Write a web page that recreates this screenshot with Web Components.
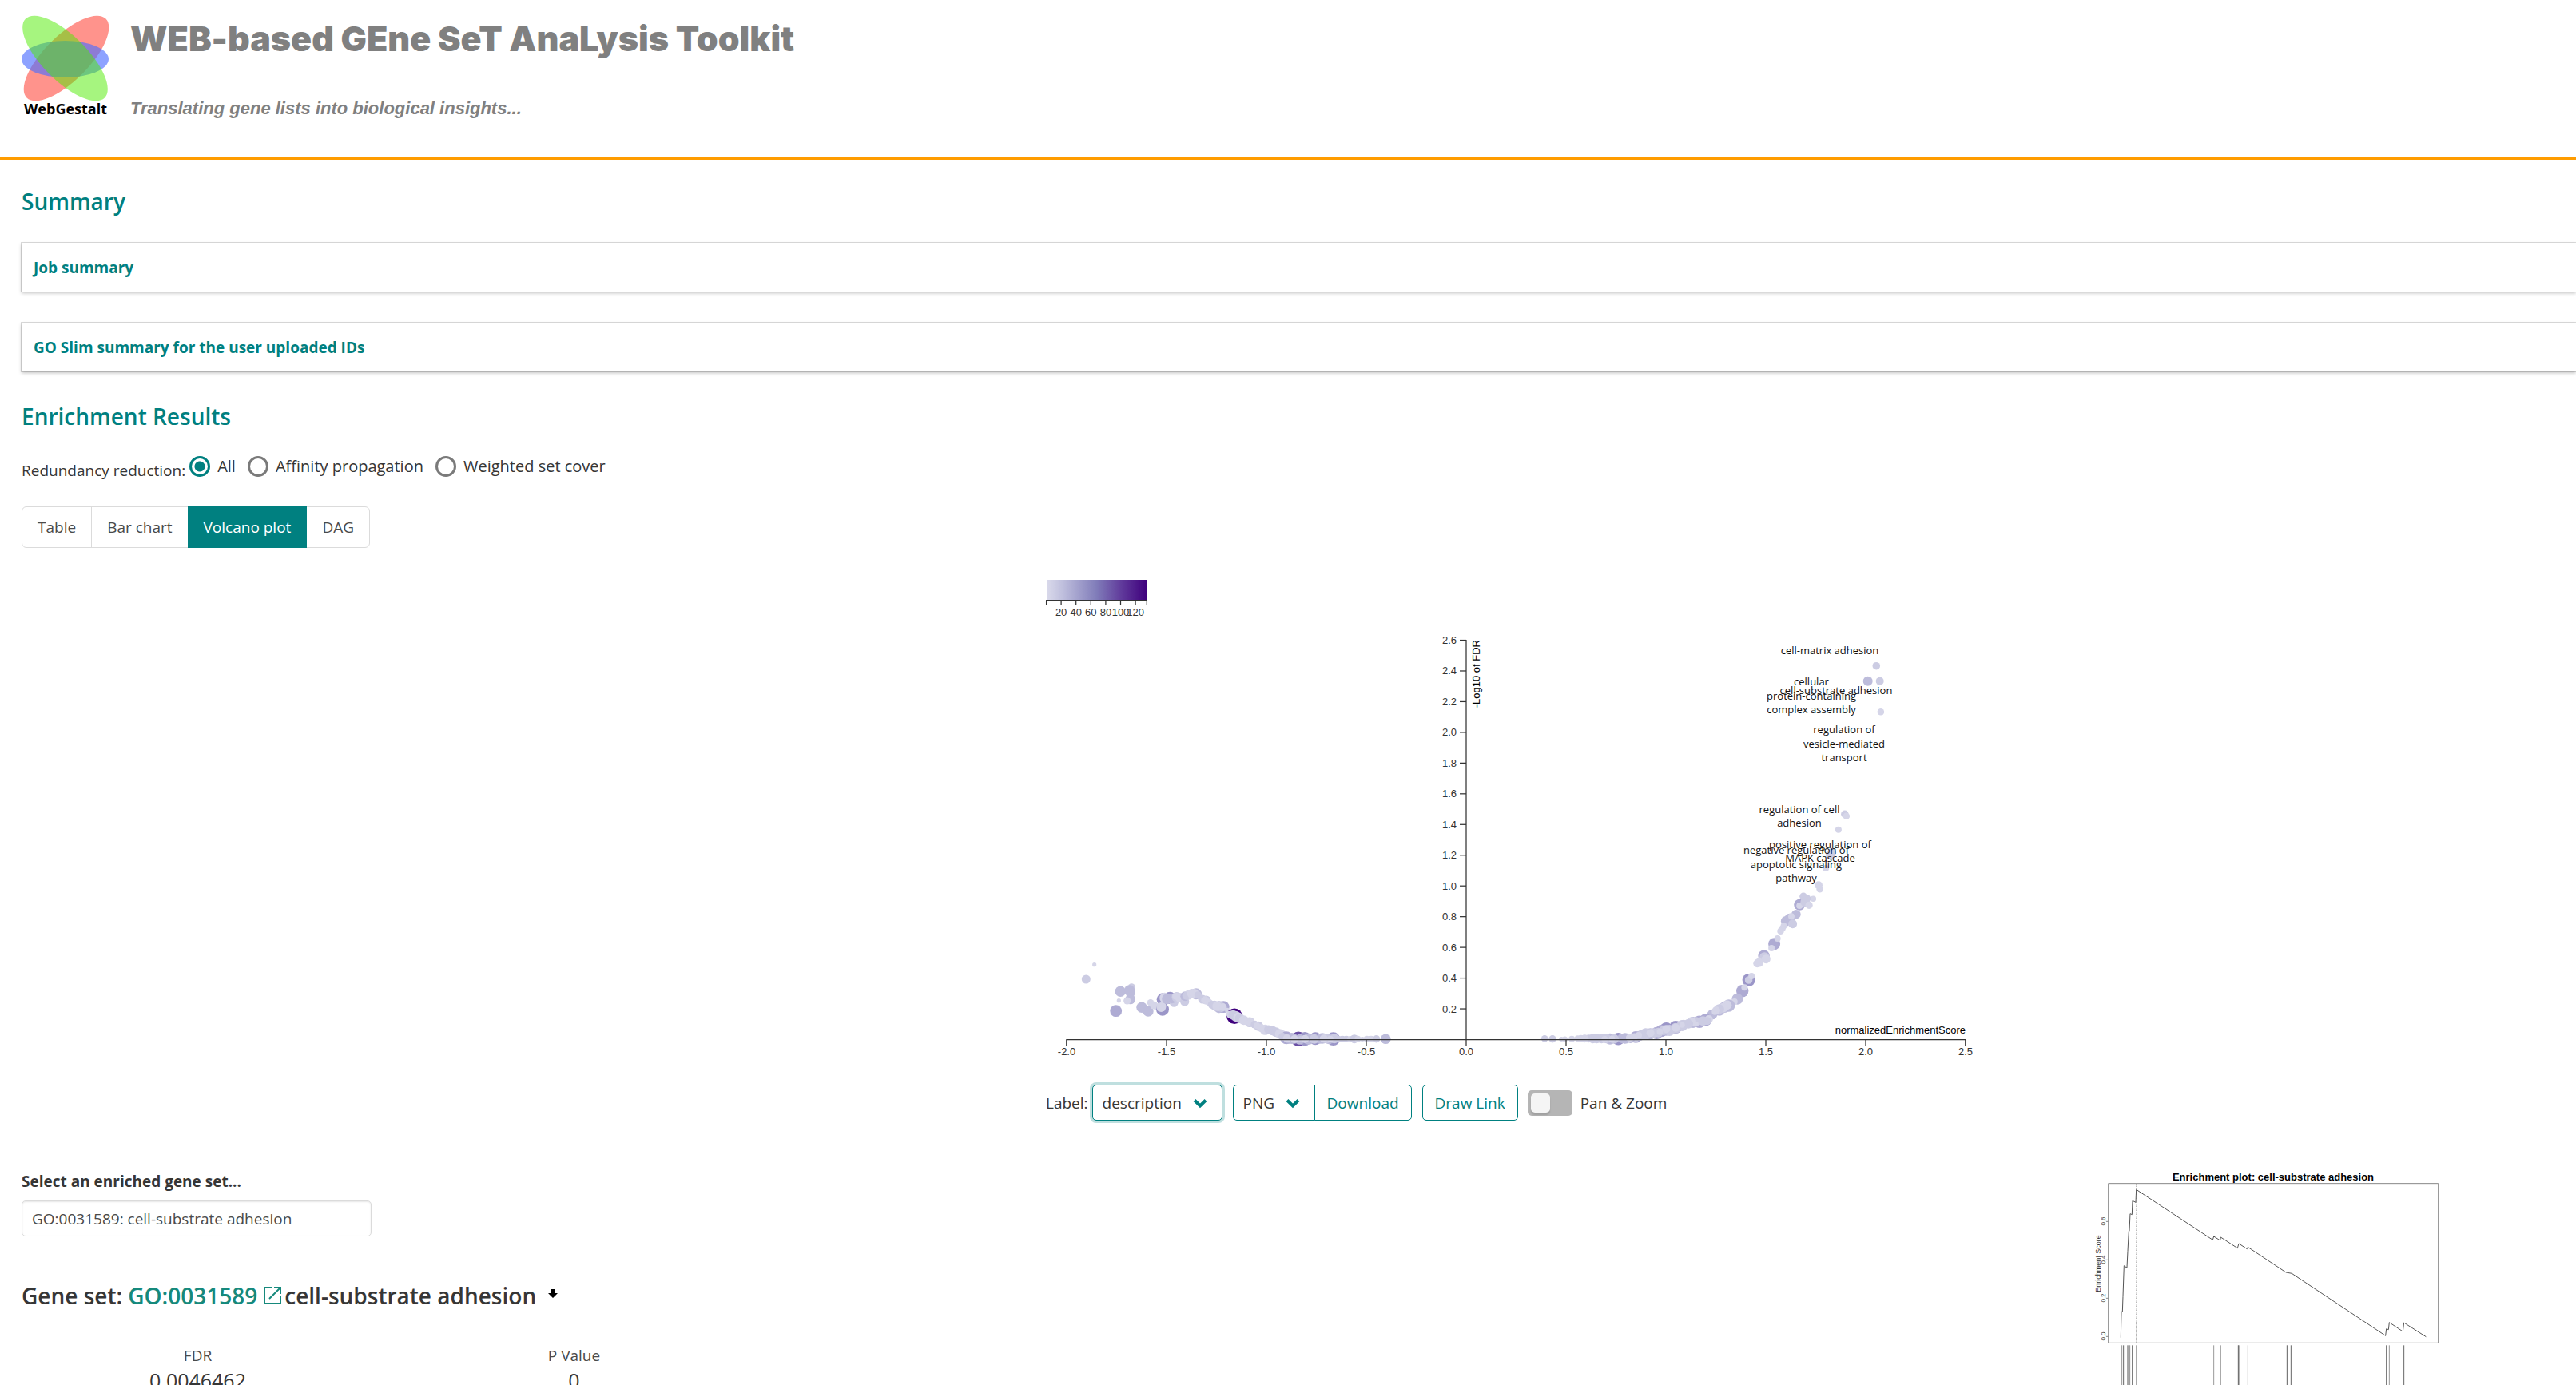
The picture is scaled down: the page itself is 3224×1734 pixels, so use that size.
<!DOCTYPE html>
<html lang="en">
<head>
<meta charset="utf-8">
<title>WebGestalt</title>
<style>
html{height:100%;overflow:hidden;background:#fff}
body{margin:0;font:19px/28px "Open Sans","Noto Sans",sans-serif;color:#363636;--teal:#008080;--line:#dbdbdb}
</style>
</head>
<body>
<wg-app></wg-app>
<script>
const define=(name,html,setup)=>customElements.define(name,class extends HTMLElement{
  constructor(){
    super();
    const t=document.createElement('template');
    t.innerHTML='<style>*{box-sizing:border-box}:host{display:block}</style>'+html;
    this.attachShadow({mode:'open'}).append(t.content.cloneNode(true));
    if(setup)setup.call(this,this.shadowRoot);
  }
});

define('wg-header',`
<style>
:host{padding-top:2px}
header{display:flex;gap:26px;height:198px;padding:0 27px;border-top:1px solid #b0b0b0;border-bottom:3px solid #ff9c00;color:#808080}
.logo{margin-top:16px;width:110px;color:#000}
.logo svg{display:block}
.logo span{display:block;text-align:center;font-size:18px;line-height:18px;font-weight:700}
h1{margin:17px 0 0;font:900 43px/56px Inter,sans-serif}
p{margin:46px 0 0;font:italic 700 22px/28px "Liberation Sans",Arial,sans-serif}
</style>
<header>
<div class="logo">
<svg width="110" height="108" viewBox="0 0 110 108">
<ellipse cx="56" cy="54" rx="28" ry="70" transform="rotate(45 56 54)" fill="#ff938c"/>
<ellipse cx="54.500" cy="55" rx="54.500" ry="23" fill="#4d6dff" opacity=".64"/>
<ellipse cx="54.500" cy="54" rx="28" ry="70" transform="rotate(-45 54.5 54)" fill="#4dec00" opacity=".5"/>
</svg><span>WebGestalt</span></div>
<div><h1>WEB-based GEne SeT AnaLysis Toolkit</h1><p>Translating gene lists into biological insights...</p></div>
</header>`);

define('wg-heading',`<style>h2{margin:0;font-size:28px;line-height:40px;font-weight:600;color:var(--teal)}</style><h2><slot></slot></h2>`);

define('wg-panel',`
<style>
button{display:block;width:100%;height:61px;padding:0 15px;border:0;background:#fff;text-align:left;font:700 19px/28px "Open Sans",sans-serif;color:var(--teal);box-shadow:0 2px 4px rgba(10,10,10,.25),0 0 0 1px rgba(10,10,10,.14)}
</style><button type="button"><slot></slot></button>`);

define('wg-reduction',`
<style>
fieldset{display:flex;align-items:flex-start;margin:0;padding:0;border:0}
legend{float:left;padding:0;margin:5px 5px 0 0;font-weight:500}
.tip{border-bottom:1px dashed #aaa}
label{display:flex;margin-right:15px;font-size:20px}
input{appearance:none;width:26px;height:26px;margin:1px 9px 0 0;border:3px solid #7a7a7a;border-radius:50%}
input:checked{border-color:var(--teal);background:radial-gradient(circle,var(--teal) 6px,#fff 7px)}
</style>
<fieldset><legend class="tip">Redundancy reduction:</legend>
<label><input type="radio" name="r" checked><span>All</span></label>
<label><input type="radio" name="r"><span class="tip">Affinity propagation</span></label>
<label><input type="radio" name="r"><span class="tip">Weighted set cover</span></label>
</fieldset>`);

define('wg-tabs',`
<style>
div{display:flex}
button{height:52px;padding:0 19px;margin-right:-1px;border:1px solid var(--line);background:#fff;color:#4a4a4a;font:19px/28px "Open Sans",sans-serif}
button:first-child{border-radius:6px 0 0 6px}
button:last-child{border-radius:0 6px 6px 0}
.on{background:var(--teal);border-color:var(--teal);color:#fff;position:relative}
</style>
<div><button>Table</button><button>Bar chart</button><button class="on">Volcano plot</button><button>DAG</button></div>`);

define('wg-volcano',`
<style>svg{display:block;overflow:visible}.ax{stroke:#333;stroke-width:1.250;fill:none}text{fill:#333;font:13px "Liberation Sans",Arial,sans-serif}.k{fill:#000}.d text{fill:#111;font:13px "Open Sans",sans-serif;text-anchor:middle}</style>
<svg width="1167" height="614" viewBox="-526 -586 1167 614">
<defs><linearGradient id="g"><stop offset="0" stop-color="#dadaeb"/><stop offset=".16" stop-color="#bfbfdd"/><stop offset=".5" stop-color="#807cb9"/><stop offset=".75" stop-color="#603a9b"/><stop offset="1" stop-color="#3f007d"/></linearGradient></defs>
<rect x="-525" y="-576" width="125" height="25" fill="url(#g)"/>
</svg>`,function(root){
  const svg=root.querySelector('svg');
  const el=(n,a,txt,parent=svg)=>{const e=document.createElementNS('http://www.w3.org/2000/svg',n);for(const k in a)e.setAttribute(k,a[k]);if(txt)e.textContent=txt;parent.append(e);return e};
  // colour legend
  el('path',{class:'ax',d:'M-525.4-544.500V-550.500H-399.700V-544.500'});
  for(let i=1;i<7;i++){const x=-525.500+i*18.600;el('path',{class:'ax',d:`M${x}-550V-544.500`});el('text',{x,y:-531,'text-anchor':'middle'},String(i*20))}
  // one dot is [x, y, radius, shade]
  const shade={a:'#d5d5e8',b:'#cccce3',c:'#bdbcdb',d:'#aeabd3',e:'#9b96c8',f:'#6a4fa5',g:'#3f007d'};
  const dots=el('g',{});
  const plot=(list,fx,fy)=>list.trim().split(/\s+/).forEach(s=>{const m=s.match(/^([\d.]+),([\d.]+),([\d.]+)([a-g])$/);el('circle',{cx:fx(+m[1]).toFixed(1),cy:fy(+m[2]).toFixed(1),r:m[3],fill:shade[m[4]]},'',dots)});
  plot(`239,83,2.6a 208,138,5.5b 337,184,6.7c 379,167,4.5b 371,180,6.7c 374,189,6c 374,213,6.3c 362,219,4.6a 331,218,2.6a 320,257,7.4d
  417,244,6.7c 441,258,6.7c 450,226,4.3a 463,236,5a 478,243,4.5a 497,214,8e 495,251,8e 490,243,6a 495,238,4.5a 523,208,7.6e 503,208,6.5a 512,212,6.5c 538,226,5.5b 530,211,6c 548,205,6.3b 560,207,6a 545,202,4.5a
  578,222,5.6b 580,202,6c 592,197,6a 584,200,5b 605,192,6a 621,193,7c 614,192,6a 628,197,4.5b 645,213,5.5b 659,216,5.6b 655,217,5a 670,226,4.5a 680,233,5b 690,236,6b 708,242,7.5c 724,242,7.4d 716,243,6b 700,239,6a 722,243,4.7a 738,254,3a
  765,277,9.8g 748,270,4.5a 760,272,6b 770,277,6.5b 780,282,6.5a 785,285,6b 800,292,6a 822,299,6.3b 812,296,5a 826,300,5a 841,308,5b 855,314,6b 849,312,4a 865,322,5a 880,328,6.5a 893,327,5.6b 907,331,6b 921,337,6b 935,343,6a 945,348,6a`,x=>x/3-545,y=>y/3-122);
  plot(`960,358,8d 1005,362,9.2f 1029,362,8.6e 1069,361,8e 1136,362,8.4e 1095,360,6.8c 980,360,7c 1045,362,7c 1120,362,6.5c 935,347,4.5a 970,362,6c 990,362,6c 1010,364,6.5c 1040,363,6.5c 1065,362,6b 1085,362,6c 1110,361,6b 1140,361,6b 945,354,5b 962,360,5a 990,363,5a 1015,362,4b 1030,362,5a 1070,362,4b 1100,361,5a 1125,362,4a 1155,362,4b 1170,362,4b 1185,362,4b 1200,363,4a 1215,362,5.5b 1228,362,4a 1245,363,3a 1262,362,4a 1278,362,4a 1298,362,4.7b 1333,362,6.3c`,x=>x/3-545,y=>y/3-122);
  // high-scoring sets
  const fx=x=>x/2.529+25;
  plot(`1235,221,4.8b 1208,278,6c 1246,278,5b 1249,394,4.3a`,fx,y=>y/3-542);
  plot(`1135,178,4.7b 1140,185,4.3a 1115,236,4a 1094,322,5.5b 1089,331,5.5b 1075,381,4a 1052,445,5a 1056,460,4.2a 1035,496,3.8a 992,518,7d 992,522,4a 1015,495,5b 1004,487,4.8b 1010,508,6b 1022,520,4.6a 981,554,5.8c 949,580,6.3c 961,572,7c 970,590,5.5b 966,562,4a 942,598,4a 938,607,4a 932,617,4.3a
  912,665,7.5d 922,645,4a 903,681,4a 879,710,7.2d 881,716,6.5b 886,722,5.5a 864,735,5.5a 858,739,5a 831,801,8e 831,801,4.8b 840,786,4a 811,842,7.7d 818,829,4a 795,872,7c 786,882,4a
  768,897,7.7c 755,903,7c 738,914,7c 762,895,6a 750,905,6a 738,910,6b 728,915,5a 716,930,6.3c 724,920,4a 695,950,7.7d 675,958,7.7d 655,960,7c 686,955,6b 665,958,6b 650,958,6a 640,965,6b 705,948,5a 700,955,5b 625,968,6b
  600,978,8e 570,985,8.3e 555,992,7.6d 540,1000,7.6d 520,1003,7c 620,972,7b 600,982,6.5b 580,990,7b 562,990,6b 545,998,6b 530,1000,6b 505,1003,7b 500,1008,6b 490,1007,6b 474,1015,7.4d 486,1012,6b 470,1018,6b 620,970,3.5a 665,966,3a 600,980,5a 570,985,5a 550,995,4a 520,1000,5a
  418,1022,7.8e 392,1022,7c 440,1020,6.8c 457,1020,6c 430,1020,6c 405,1022,6b 380,1021,6b 365,1021,6b 350,1021,6b 338,1021,6b 325,1021,5b 312,1021,5a 300,1021,4.5a 290,1021,4a 271,1022,4a 249,1023,3.5a 238,1023,3a 210,1022,4.7b 185,1021,4.3b 455,1018,5a 398,1022,4a 375,1023,4a 470,1015,4a 483,1008,4a`,fx,y=>y/3-342);
  // axes
  el('path',{class:'ax',d:'M-500 7V-.4H625V7'});
  el('path',{class:'ax',d:'M-8-500.500H0V-.4'});
  for(let i=-4;i<6;i++){const x=i*125;el('path',{class:'ax',d:`M${x}-.4V7`});el('text',{x,y:19,'text-anchor':'middle'},(i/2).toFixed(1))}
  for(let i=1;i<14;i++){const y=-i*38.460-.5;el('path',{class:'ax',d:`M-8 ${y}H0`});el('text',{x:-12,y:y+4.500,'text-anchor':'end'},(i/5).toFixed(1))}
  el('text',{class:'k',x:625,y:-8,'text-anchor':'end'},'normalizedEnrichmentScore');
  el('text',{class:'k',transform:'translate(17 -501) rotate(-90)','text-anchor':'end'},'-Log10 of FDR');
  const names=el('g',{class:'d'});
  [[455,-483,'cell-matrix adhesion'],[432,-444,'cellular'],[432,-426,'protein-containing'],[432,-409,'complex assembly'],[463,-433,'cell-substrate adhesion'],[473,-384,'regulation of'],[473,-366,'vesicle-mediated'],[473,-349,'transport'],[417,-284,'regulation of cell'],[417,-267,'adhesion'],[443,-240,'positive regulation of'],[443,-223,'MAPK cascade'],[413,-233,'negative regulation of'],[413,-215,'apoptotic signaling'],[413,-198,'pathway']].forEach(([x,y,t])=>el('text',{x,y},t,names));
});

define('wg-controls',`
<style>
:host{display:flex;align-items:center;height:45px}
.sel{position:relative;display:block;margin-left:5px}
select,button{height:45px;border:1px solid var(--teal);border-radius:5px;background:#fff;font:19px/28px "Open Sans",sans-serif;color:#363636}
select{appearance:none;width:163px;padding:0 12px;display:block}
.focus select{box-shadow:0 0 0 3px rgba(0,128,128,.25)}
.sel svg{position:absolute;right:19px;top:17px;pointer-events:none}
.png{margin-left:13px}
.png select{width:103px;border-radius:5px 0 0 5px}
button{color:var(--teal);padding:0 15px}
.dl{border-radius:0 5px 5px 0;margin-left:-1px}
.draw{margin:0 12px 0 13px}
.sw{display:flex;align-items:center;gap:10px}
.sw input{appearance:none;width:56px;height:32px;margin:0;padding:4px;border-radius:5px;background:#b5b5b5}
.sw input::before{content:"";display:block;width:24px;height:24px;border-radius:5px;background:#f5f5f5;box-shadow:0 3px 2px rgba(0,0,0,.12)}
</style>
<label for="lab">Label:</label>
<span class="sel focus"><select id="lab"><option>description</option></select><svg width="18" height="13" viewBox="0 0 18 13"><path d="M2 2.500L9 9.500L16 2.500" fill="none" stroke="#008080" stroke-width="4"/></svg></span>
<span class="sel png"><select aria-label="Format"><option>PNG</option></select><svg width="18" height="13" viewBox="0 0 18 13"><path d="M2 2.500L9 9.500L16 2.500" fill="none" stroke="#008080" stroke-width="4"/></svg></span>
<button class="dl">Download</button><button class="draw">Draw Link</button>
<label class="sw"><input type="checkbox"><span>Pan &amp; Zoom</span></label>`);

define('wg-geneset',`
<style>
.pick{display:block;margin:15px 0 10px;font-weight:700}
input{display:block;width:438px;height:45px;padding:0 12px;border:1px solid var(--line);border-radius:5px;box-shadow:inset 0 1px 2px rgba(10,10,10,.1);font:19px/28px "Open Sans",sans-serif;color:#4a4a4a}
h3{display:flex;align-items:center;margin:54px 0 42px;font-size:28px;line-height:40px;font-weight:600}
a{display:flex;align-items:center;gap:7px;margin:0 3px 0 7px;color:#16897c;text-decoration:none}
.dl{margin-left:15px}
dl{display:grid;grid-template-columns:471px 471px;margin:0 0 0 -15px;text-align:center}
dt{line-height:26px;color:#4a4a4a;font-size:19px}
dd{margin:0;font-size:25px;line-height:36px}
</style>
<label class="pick" for="gs">Select an enriched gene set...</label>
<input id="gs" value="GO:0031589: cell-substrate adhesion">
<h3><span>Gene set:</span><a href="#">GO:0031589<svg width="24" height="24" viewBox="0 0 24 24" fill="none" stroke="#16897c" stroke-width="2"><path d="M11 2H2V22H22V13M14 2H22V10M21 3L8 16"/></svg></a><span>cell-substrate adhesion</span>
<svg class="dl" width="12" height="16" viewBox="0 0 12 16"><path d="M4 0H8V5H12L6 11L0 5H4ZM0 13H12V14H0Z"/></svg></h3>
<dl><div><dt>FDR</dt><dd>0.0046462</dd></div><div><dt>P Value</dt><dd>0</dd></div></dl>`);

define('wg-enrichment-plot',`
<style>svg{display:block}path{fill:none;stroke:#555;stroke-width:1;vector-effect:non-scaling-stroke}text{font:8px "Liberation Sans",Arial,sans-serif;fill:#333;text-anchor:middle}.t{font-weight:700;font-size:13px;fill:#000}</style>
<svg width="480" height="400" viewBox="0 0 480 400">
<text class="t" x="245" y="28">Enrichment plot: cell-substrate adhesion</text>
<g transform="scale(.33333)">
<path style="stroke:#888" d="M116 95H1355V694H116ZM108 238H116M108 382H116M108 526H116M108 670H116"/>
<path style="stroke:#aaa;stroke-dasharray:1.500 1" d="M221 96V693"/>
<path d="M163 674L165 577H169L171 520L175 404L180 408L186 411L189 350L193 274H195L198 209L205 212L207 160L213 163L219 166L221 118L508 307L512 294L536 309L538 297L601 338L606 321L637 341L640 334L783 429L805 433L1157 667L1160 641L1168 644L1171 617L1222 651L1226 618L1309 671"/>
<path style="stroke:#999" d="M164 703V1200M167 703V1200M188 703V1200M191 703V1200M197 703V1200M221 703V1200M512 703V1200M538 703V1200M640 703V1200M1171 703V1200"/>
<path style="stroke:#666" d="M173 703V1200M194 703V1200M206 703V1200M604 703V1200M606 703V1200M787 703V1200M790 703V1200M802 703V1200M1160 703V1200M1226 703V1200"/>
</g>
<g transform="rotate(-90)"><text x="-79" y="35">0.6</text><text x="-127" y="35">0.4</text><text x="-175" y="35">0.2</text><text x="-223" y="35">0.0</text><text x="-132" y="29" style="font-size:9px">Enrichment Score</text></g>
</svg>`);

define('wg-app',`
<style>
main{padding:32px 0 0 27px}
wg-panel{margin-top:32px}
wg-panel+wg-panel{margin-top:39px}
.res{margin-top:36px}
wg-reduction{margin-top:29px}
wg-tabs{margin-top:30px}
.chart{display:grid;grid-template-columns:1282fr 1167px 748fr;margin-top:30px}
.chart>div{grid-column:2}
wg-controls{margin-top:28px}
.detail{display:grid;grid-template-columns:2573fr 624fr;margin-top:47px}
</style>
<wg-header></wg-header>
<main>
<wg-heading>Summary</wg-heading>
<wg-panel>Job summary</wg-panel>
<wg-panel>GO Slim summary for the user uploaded IDs</wg-panel>
<wg-heading class="res">Enrichment Results</wg-heading>
<wg-reduction></wg-reduction>
<wg-tabs></wg-tabs>
<section class="chart"><div><wg-volcano></wg-volcano><wg-controls></wg-controls></div></section>
<section class="detail"><wg-geneset></wg-geneset><wg-enrichment-plot></wg-enrichment-plot></section>
</main>`);
</script>
</body>
</html>
